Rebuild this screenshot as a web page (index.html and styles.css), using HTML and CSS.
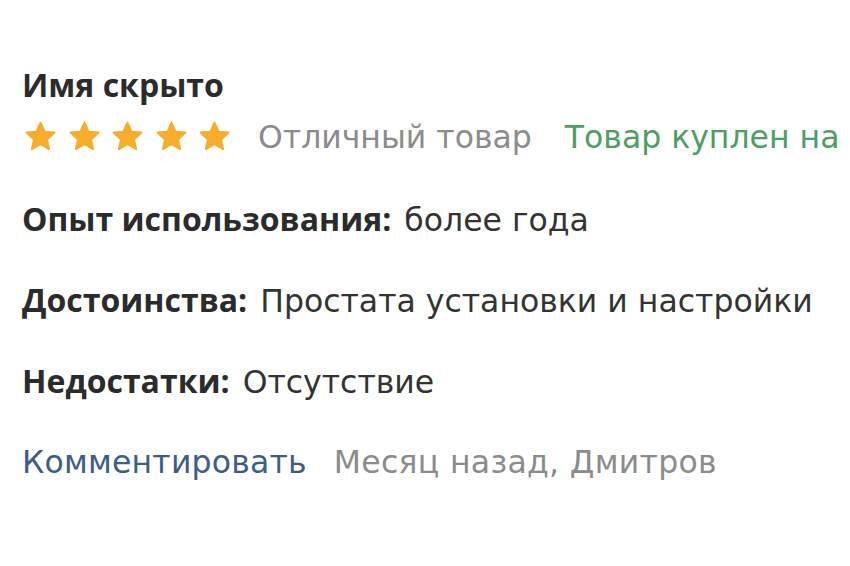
FILE: index.html
```html
<!DOCTYPE html>
<html lang="ru">
<head>
<meta charset="utf-8">
<link rel="stylesheet" href="styles.css">
</head>
<body>
<div class="review">
  <div class="name">Имя скрыто</div>
  <div class="rating-row">
    <div class="stars">
      <svg class="star" viewBox="0 0 24 24"><path d="M12 1.8l2.9 6.4 7 .7-5.3 4.8 1.5 6.9L12 17l-6.1 3.6 1.5-6.9-5.3-4.8 7-.7z" stroke-linejoin="round"/></svg>
      <svg class="star" viewBox="0 0 24 24"><path d="M12 1.8l2.9 6.4 7 .7-5.3 4.8 1.5 6.9L12 17l-6.1 3.6 1.5-6.9-5.3-4.8 7-.7z" stroke-linejoin="round"/></svg>
      <svg class="star" viewBox="0 0 24 24"><path d="M12 1.8l2.9 6.4 7 .7-5.3 4.8 1.5 6.9L12 17l-6.1 3.6 1.5-6.9-5.3-4.8 7-.7z" stroke-linejoin="round"/></svg>
      <svg class="star" viewBox="0 0 24 24"><path d="M12 1.8l2.9 6.4 7 .7-5.3 4.8 1.5 6.9L12 17l-6.1 3.6 1.5-6.9-5.3-4.8 7-.7z" stroke-linejoin="round"/></svg>
      <svg class="star" viewBox="0 0 24 24"><path d="M12 1.8l2.9 6.4 7 .7-5.3 4.8 1.5 6.9L12 17l-6.1 3.6 1.5-6.9-5.3-4.8 7-.7z" stroke-linejoin="round"/></svg>
    </div>
    <span class="verdict">Отличный товар</span>
    <span class="bought">Товар куплен на Маркете</span>
  </div>
  <div class="field"><span class="label">Опыт использования:</span><span class="value">более года</span></div>
  <div class="field"><span class="label">Достоинства:</span><span class="value">Простата установки и настройки</span></div>
  <div class="field"><span class="label">Недостатки:</span><span class="value">Отсутствие</span></div>
  <div class="footer">
    <span class="comment">Комментировать</span><span class="meta">Месяц назад, Дмитров</span>
  </div>
</div>
</body>
</html>
```
FILE: styles.css
```css
html, body {
  margin: 0;
  padding: 0;
  background: #fff;
  overflow: hidden;
}
body {
  font-family: "DejaVu Sans", "Open Sans", sans-serif;
  font-size: 31.5px;
  line-height: 40px;
  color: #333;
  width: 850px;
  height: 566px;
}
.review {
  padding: 65px 0 0 22px;
  white-space: nowrap;
  overflow: hidden;
  height: 501px;
}
.name {
  font-family: "Open Sans", sans-serif;
  font-size: 32px;
  font-weight: 700;
  color: #2b2b2b;
}
.rating-row {
  display: flex;
  align-items: center;
  height: 64px;
  margin-bottom: 30px;
}
.stars {
  display: flex;
  gap: 8.5px;
  margin-left: 1px;
  margin-right: 26px;
}
.star {
  width: 35px;
  height: 34px;
  fill: #f6ad2e;
  stroke: #f6ad2e;
  stroke-width: 1.4;
}
.verdict {
  color: #8b8b8b;
  margin-right: 33px;
}
.bought {
  color: #4e9d64;
}
.field {
  margin-bottom: 40px;
}
.label {
  font-family: "Open Sans", sans-serif;
  font-size: 32px;
  font-weight: 700;
  color: #2b2b2b;
}
.value {
  color: #333;
  margin-left: 13px;
}
.footer {
  margin-top: 5px;
}
.comment {
  color: #3c5d88;
  margin-right: 27px;
  letter-spacing: 0.2px;
}
.meta {
  color: #8b8b8b;
  letter-spacing: 0.3px;
}
```
